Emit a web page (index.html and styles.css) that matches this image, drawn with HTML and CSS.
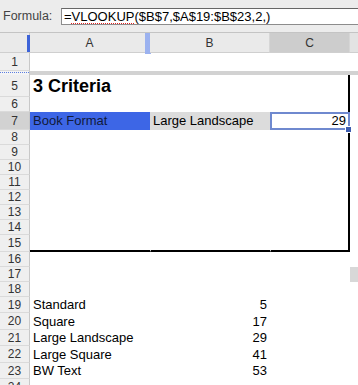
FILE: index.html
```html
<!DOCTYPE html>
<html lang="en">
  <head>
    <meta charset="UTF-8" />
    <title>Sheet</title>
    <link rel="stylesheet" href="styles.css">
  </head>
  <body>
    <div class="formula-bar">
      <span class="formula-label">Formula:</span>
      <div class="formula-input">=<span class="spell">VLOOKUP</span>($B$7,$A$19:$B$23,2,)</div>
    </div>

    <table class="sheet">
      <colgroup>
        <col class="col-rh" />
        <col class="col-a" />
        <col class="col-b" />
        <col class="col-c" />
        <col class="col-d" />
      </colgroup>
      <tr class="head-row">
        <th class="corner"><span class="freeze-col"></span></th>
        <th class="col-head">A<span class="freeze-handle"></span></th>
        <th class="col-head">B</th>
        <th class="col-head active">C</th>
        <th class="col-head rest"></th>
      </tr>
      <tr class="r-1">
        <td class="rh">1</td><td></td><td></td><td></td><td></td>
      </tr>
      <tr class="freeze-row">
        <td class="rh-freeze"></td><td class="bar"></td><td class="bar"></td><td class="bar"></td><td class="bar"></td>
      </tr>
      <tr class="r-5">
        <td class="rh">5</td><td class="title">3 Criteria</td><td></td><td class="box-r"></td><td></td>
      </tr>
      <tr class="r-6">
        <td class="rh">6</td><td></td><td></td><td class="box-r"></td><td></td>
      </tr>
      <tr class="r-7">
        <td class="rh sel">7</td>
        <td class="picked">Book Format</td>
        <td class="grey">Large Landscape</td>
        <td class="current num">29<span class="fill-handle"></span></td>
        <td></td>
      </tr>
      <tr class="r-n"><td class="rh">8</td><td></td><td></td><td class="box-r"></td><td></td></tr>
      <tr class="r-n"><td class="rh">9</td><td></td><td></td><td class="box-r"></td><td></td></tr>
      <tr class="r-n"><td class="rh">10</td><td></td><td></td><td class="box-r"></td><td></td></tr>
      <tr class="r-n"><td class="rh">11</td><td></td><td></td><td class="box-r"></td><td></td></tr>
      <tr class="r-n"><td class="rh">12</td><td></td><td></td><td class="box-r"></td><td></td></tr>
      <tr class="r-n"><td class="rh">13</td><td></td><td></td><td class="box-r"></td><td></td></tr>
      <tr class="r-n"><td class="rh">14</td><td></td><td></td><td class="box-r"></td><td></td></tr>
      <tr class="r-15">
        <td class="rh">15</td><td class="box-b"></td><td class="box-b gap"></td><td class="box-b box-r gap"></td><td></td>
      </tr>
      <tr class="r-s"><td class="rh">16</td><td></td><td></td><td></td><td></td></tr>
      <tr class="r-s"><td class="rh">17</td><td></td><td></td><td></td><td class="scroll"></td></tr>
      <tr class="r-s"><td class="rh">18</td><td></td><td></td><td></td><td></td></tr>
      <tr class="r-m"><td class="rh">19</td><td>Standard</td><td class="num">5</td><td></td><td></td></tr>
      <tr class="r-l"><td class="rh">20</td><td>Square</td><td class="num">17</td><td></td><td></td></tr>
      <tr class="r-m"><td class="rh">21</td><td>Large Landscape</td><td class="num">29</td><td></td><td></td></tr>
      <tr class="r-l"><td class="rh">22</td><td>Large Square</td><td class="num">41</td><td></td><td></td></tr>
      <tr class="r-m"><td class="rh">23</td><td>BW Text</td><td class="num">53</td><td></td><td></td></tr>
      <tr class="r-m"><td class="rh">24</td><td></td><td></td><td></td><td></td></tr>
    </table>
  </body>
</html>
```

FILE: styles.css
```css
html, body {
  margin: 0;
  padding: 0;
  overflow: hidden;
  background: #fff;
  font-family: "Liberation Sans", Arial, sans-serif;
}
.formula-bar {
  height: 33px;
  background: #ececec;
  display: flex;
  align-items: center;
  box-sizing: border-box;
  border-bottom: 1px solid #c4c4c4;
  white-space: nowrap;
  overflow: hidden;
}
.formula-label {
  font-size: 12.5px;
  color: #444;
  margin-left: 3px;
  width: 58px;
  flex: none;
}
.formula-input {
  flex: none;
  width: 320px;
  height: 17px;
  box-sizing: border-box;
  background: #fff;
  border: 1px solid #8c8c8c;
  border-top-color: #666;
  font-size: 13px;
  line-height: 15px;
  padding-left: 2px;
  color: #000;
}
.spell {
  text-decoration: underline dotted #d22;
  text-decoration-thickness: 1px;
  text-underline-offset: 2px;
}

.sheet {
  table-layout: fixed;
  width: 358px;
  border-collapse: separate;
  border-spacing: 0;
  font-size: 13px;
}
.col-rh { width: 30px; }
.col-a { width: 120px; }
.col-b { width: 120px; }
.col-c { width: 80px; }
.col-d { width: 8px; }

.sheet td, .sheet th {
  padding: 0 3px;
  box-sizing: border-box;
  white-space: nowrap;
  overflow: hidden;
  color: #000;
  font-weight: normal;
  line-height: 14px;
  text-align: left;
}

.head-row th {
  height: 20px;
  background: #eaeaea;
  border-bottom: 1px solid #cfcfcf;
  border-right: 1px solid #d6d6d6;
  font-size: 12px;
  color: #333;
  text-align: center;
  position: relative;
  overflow: visible;
}
.head-row .active { background: #cdcdcd; }
.head-row .rest { background: #e3e3e3; border-right: 0; }
.head-row .corner { border-right: 1px solid #c8c8c8; }
.freeze-col {
  position: absolute;
  right: -1px;
  top: 2px;
  bottom: 0;
  width: 3px;
  background: radial-gradient(#3d63d8 0.8px, transparent 1px) 0 0 / 2px 2px;
}
.freeze-handle {
  position: absolute;
  right: -2px;
  top: 0;
  bottom: -2px;
  width: 6px;
  background: #5b7ee0 radial-gradient(#9db3f0 0.7px, transparent 1px) 0 0 / 2px 2px;
}

.sheet .rh {
  background: #efefef;
  border-right: 1px solid #c8c8c8;
  border-bottom: 1px solid #dadada;
  font-size: 12px;
  color: #333;
  text-align: center;
}
.sheet .rh.sel { background: #d2d2d2; }

.r-1 td { height: 18px; }
.freeze-row td { height: 4px; line-height: 0; font-size: 0; }
.rh-freeze {
  background: #f4f4f4;
  border-right: 1px solid #c8c8c8;
  position: relative;
}
.rh-freeze::after {
  content: "";
  position: absolute;
  left: 0;
  right: 0;
  top: 1px;
  height: 1px;
  border-top: 1px dotted #5b7ee0;
}
.bar { background: #d2d2d2; }

.r-5 td { height: 22px; }
.r-6 td { height: 15px; }
.r-7 td { height: 16px; }
.r-n td { height: 15px; }
.r-15 td { height: 17px; }
.r-s td { height: 15px; }
.r-m td { height: 16px; }
.r-l td { height: 17px; }

.sheet .title {
  font-size: 18px;
  font-weight: bold;
  overflow: visible;
}
.sheet .picked { background: #3d66e6; color: #111a3a; }
.grey { background: #dcdcdc; }
.sheet .num { text-align: right; }
.sheet .current {
  border: 2px solid #6f89cf;
  position: relative;
  overflow: visible;
  padding-right: 2px;
}
.fill-handle {
  position: absolute;
  right: -4px;
  bottom: -5px;
  width: 5px;
  height: 5px;
  background: #3d5db0;
  border: 1px solid #fff;
}
.box-r { border-right: 2px solid #000; }
.box-b { border-bottom: 2px solid #000; }
.gap { border-left: 1px solid #fff; }
.scroll { background: #d8d8d8; }
```
